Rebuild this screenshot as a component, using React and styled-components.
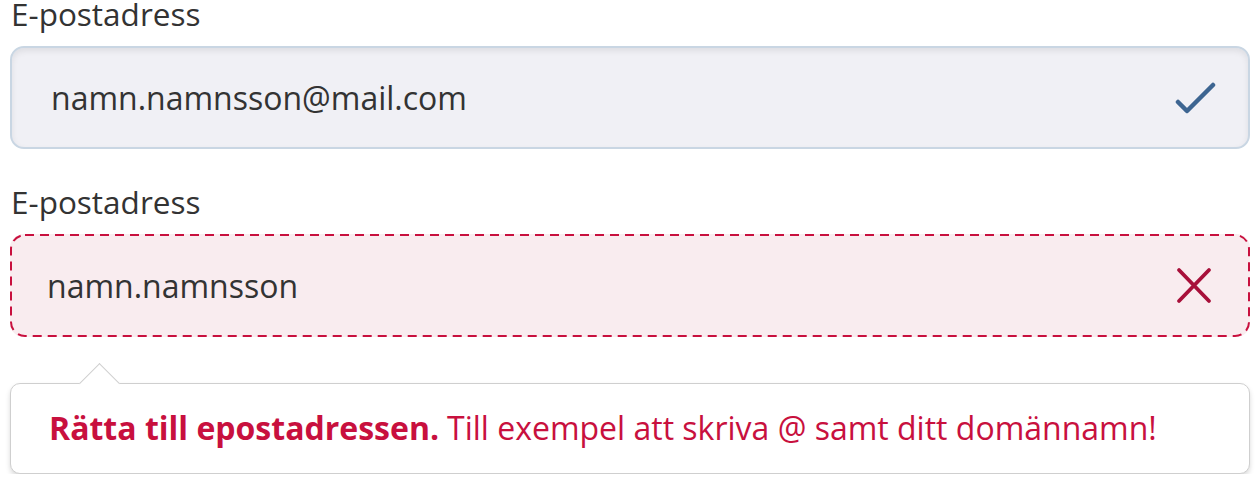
import React from "react";
import styled, { createGlobalStyle } from "styled-components";

const Global = createGlobalStyle`
  html, body { margin: 0; padding: 0; background: #fff; }
  body { font-family: "Open Sans", "Liberation Sans", sans-serif; }
`;

const Page = styled.div`
  padding: 0 10px;
  display: flex;
  flex-direction: column;
`;

const Field = styled.div`
  display: flex;
  flex-direction: column;
  margin-bottom: ${(p) => p.$mb || 0}px;
`;

const Label = styled.label`
  font-size: 31.5px;
  line-height: 27px;
  color: #333;
  margin-left: 1px;
  margin-bottom: 19px;
`;

const InputBox = styled.div`
  position: relative;
  box-sizing: border-box;
  height: 103px;
  display: flex;
  align-items: center;
  justify-content: space-between;
  border-radius: 14px;
  padding: 0 ${(p) => (p.$error ? 36 : 32)}px 0 ${(p) => (p.$error ? 35 : 39)}px;
  font-size: 32px;
  color: #333;
  ${(p) =>
    p.$error
      ? `
    border: 2px solid transparent;
    background: #f9ecef;
  `
      : `
    border: 2px solid #c9d6e3;
    background: #f0f0f5;
    box-shadow: inset 0 3px 6px rgba(0,0,0,0.08);
  `}
`;

const DashedFrame = styled.svg`
  position: absolute;
  top: -1px;
  left: -1px;
  width: calc(100% + 2px);
  height: calc(100% + 2px);
  overflow: visible;
  pointer-events: none;
`;

const Tooltip = styled.div`
  position: relative;
  margin-top: 46px;
  box-sizing: border-box;
  height: 91px;
  background: #fff;
  border: 1.5px solid #cfcfcf;
  border-radius: 10px;
  box-shadow: 0 3px 5px rgba(0,0,0,0.15);
  display: flex;
  align-items: center;
  padding: 0 36px 2px 38px;
  font-size: 32px;
  color: #c8103e;
  &::before {
    content: "";
    position: absolute;
    left: 74px;
    top: -15px;
    width: 28px;
    height: 28px;
    background: #fff;
    border-left: 1.5px solid #cfcfcf;
    border-top: 1.5px solid #cfcfcf;
    transform: rotate(45deg);
  }
`;

const Strong = styled.strong`
  font-weight: 700;
  margin-right: 8px;
`;

const Check = () => (
  <svg width="42" height="34" viewBox="0 0 42 34" fill="none">
    <path d="M4 21 L13 30 L39 4" stroke="#3d6591" strokeWidth="4.5" strokeLinecap="round" strokeLinejoin="round" />
  </svg>
);

const Cross = () => (
  <svg width="36" height="37" viewBox="0 0 36 37" fill="none">
    <path d="M3 3 L33 34 M33 3 L3 34" stroke="#a8103a" strokeWidth="3.8" strokeLinecap="round" />
  </svg>
);

export default function App() {
  return (
    <>
      <Global />
      <Page>
        <Field $mb={39}>
          <Label>E-postadress</Label>
          <InputBox>
            <span>namn.namnsson@mail.com</span>
            <Check />
          </InputBox>
        </Field>
        <Field>
          <Label>E-postadress</Label>
          <InputBox $error>
            <DashedFrame>
              <rect x="0" y="0" width="100%" height="100%" rx="14" fill="none" stroke="#c8103e" strokeWidth="2" strokeDasharray="9 6" />
            </DashedFrame>
            <span>namn.namnsson</span>
            <Cross />
          </InputBox>
        </Field>
        <Tooltip>
          <span>
            <Strong>Rätta till epostadressen.</Strong>Till exempel att skriva @ samt ditt domännamn!
          </span>
        </Tooltip>
      </Page>
    </>
  );
}
